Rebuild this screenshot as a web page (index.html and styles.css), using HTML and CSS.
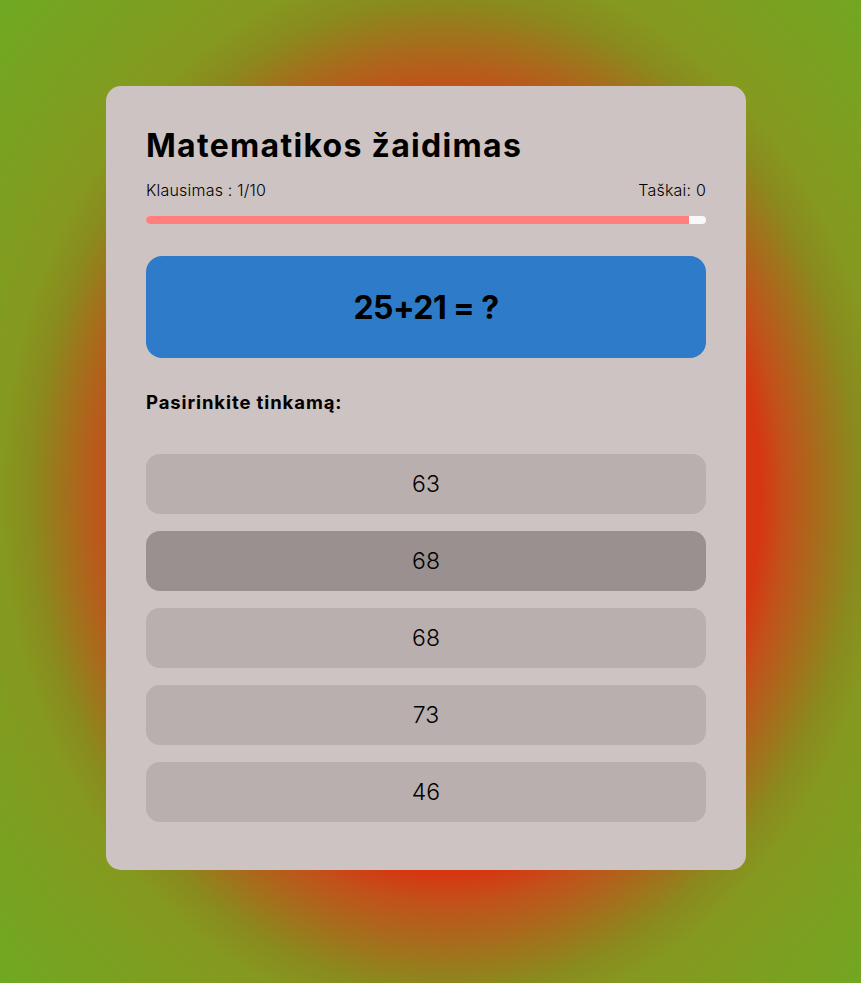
FILE: index.html
```html
<!DOCTYPE html>
<html lang="lt">
<head>
<meta charset="utf-8">
<title>Matematikos žaidimas</title>
<link rel="stylesheet" href="styles.css">
</head>
<body>
<div class="page">
  <main class="card">
    <h1 class="title">Matematikos žaidimas</h1>
    <div class="stats">
      <span class="stat">Klausimas : 1/10</span>
      <span class="stat">Taškai: 0</span>
    </div>
    <div class="progress"><div class="progress-fill" style="width: 97%"></div></div>
    <div class="question">25+21 = ?</div>
    <p class="prompt">Pasirinkite tinkamą:</p>
    <div class="answers">
      <button class="answer">63</button>
      <button class="answer answer-hover">68</button>
      <button class="answer">68</button>
      <button class="answer">73</button>
      <button class="answer">46</button>
    </div>
  </main>
</div>
</body>
</html>
```
FILE: styles.css
```css
html, body {
  margin: 0;
  padding: 0;
  height: 100%;
}
body {
  font-family: Inter, "DejaVu Sans", sans-serif;
  color: #000;
  background: radial-gradient(ellipse 606px 727px at 445px 495px,
    #d8340f 0%,
    #d63612 52%,
    #c2511a 56%,
    #8a8a1e 68%,
    #85991f 73.4%,
    #6fa922 100%);
  overflow: hidden;
}
.page {
  padding: 86px 0 0 106px;
}
.card {
  box-sizing: border-box;
  width: 640px;
  height: 784px;
  background: #cdc3c3;
  border-radius: 15px;
  padding: 40px;
  display: flex;
  flex-direction: column;
}
.title {
  margin: 0;
  font-size: 32px;
  font-weight: 700;
  line-height: 40px;
  letter-spacing: 1.3px;
}
.stats {
  display: flex;
  justify-content: space-between;
  margin-top: 14px;
  font-size: 16px;
  line-height: 20px;
  font-weight: 300;
  letter-spacing: 0.2px;
}
.progress {
  margin-top: 16px;
  height: 8px;
  background: #f8f8f8;
  border-radius: 4px;
  overflow: hidden;
}
.progress-fill {
  height: 100%;
  background: #ff7f7f;
}
.question {
  margin-top: 32px;
  height: 102px;
  background: #2e7bc9;
  border-radius: 16px;
  display: flex;
  align-items: center;
  justify-content: center;
  font-size: 32px;
  font-weight: 700;
  letter-spacing: -0.6px;
}
.prompt {
  margin: 33px 0 0;
  font-size: 18.5px;
  font-weight: 700;
  line-height: 22px;
  letter-spacing: 0.9px;
}
.answers {
  margin-top: 41px;
  display: flex;
  flex-direction: column;
  gap: 17px;
}
.answer {
  height: 60px;
  border: none;
  border-radius: 14px;
  background: #b8afae;
  font-family: inherit;
  font-size: 23px;
  font-weight: 300;
  color: #000;
  padding: 0;
}
.answer-hover {
  background: #9a9090;
}
```
